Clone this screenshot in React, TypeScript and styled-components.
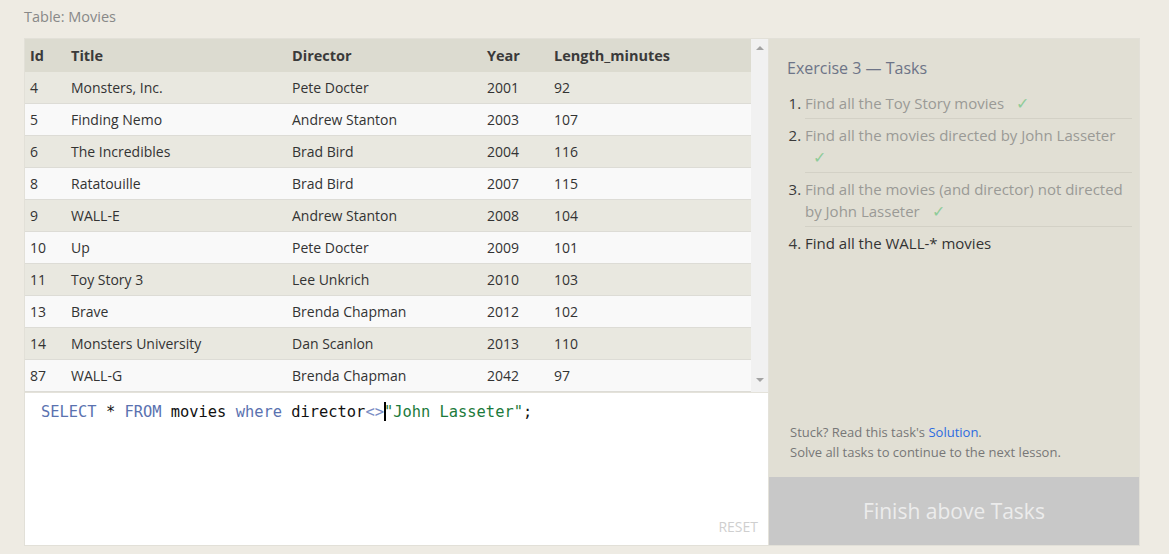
import React from "react";
import styled, { createGlobalStyle } from "styled-components";

const GlobalStyle = createGlobalStyle`
  html, body { margin: 0; padding: 0; background: #eeebe3; }
  body { font-family: "Open Sans", "Noto Sans", sans-serif; color: #333; }
  * { box-sizing: border-box; }
`;

const Page = styled.div`
  padding: 6px 29px 8px 24px;
  width: 1169px;
  height: 554px;
`;

const Caption = styled.div`
  font-size: 14.5px;
  color: #888;
  height: 24px;
  line-height: 22px;
  margin-bottom: 8px;
`;

const Frame = styled.div`
  display: flex;
  width: 1116px;
  height: 508px;
  border: 1px solid #e2e0d8;
  background: #fff;
`;

const LeftCol = styled.div`
  width: 743px;
  display: flex;
  flex-direction: column;
`;

const TableArea = styled.div`
  display: flex;
  height: 354px;
  border-bottom: 1px solid #e4e2da;
`;

const TableBody = styled.div`
  flex: 1;
  display: flex;
  flex-direction: column;
`;

const Row = styled.div<{ $kind: "head" | "odd" | "even" }>`
  display: grid;
  grid-template-columns: 41px 221px 195px 67px 1fr;
  align-items: center;
  height: ${(p) => (p.$kind === "head" ? "33px" : "32px")};
  background: ${(p) =>
    p.$kind === "head" ? "#dcdbd0" : p.$kind === "odd" ? "#e9e8e0" : "#f9f9f9"};
  border-bottom: ${(p) => (p.$kind === "head" ? "none" : "1px solid #dddcd6")};
  font-size: ${(p) => (p.$kind === "head" ? "14.5px" : "14px")};
  font-weight: ${(p) => (p.$kind === "head" ? 700 : 400)};
  color: ${(p) => (p.$kind === "head" ? "#3a3a3a" : "#333")};
`;

const Cell = styled.div`
  padding-left: 5px;
  white-space: nowrap;
`;

const Scrollbar = styled.div`
  width: 17px;
  background: #f1f1f1;
  display: flex;
  flex-direction: column;
  justify-content: space-between;
  align-items: center;
  padding: 6px 0 6px;
`;

const Arrow = styled.div<{ $up?: boolean }>`
  width: 0;
  height: 0;
  border-left: 4px solid transparent;
  border-right: 4px solid transparent;
  ${(p) =>
    p.$up ? "border-bottom: 4px solid #a3a3a3;" : "border-top: 4px solid #a3a3a3;"}
  margin-top: ${(p) => (p.$up ? "1px" : "0")};
  margin-bottom: ${(p) => (p.$up ? "0" : "4px")};
`;

const Editor = styled.div`
  flex: 1;
  background: #fff;
  padding: 8px 16px;
  display: flex;
  flex-direction: column;
  justify-content: space-between;
`;

const Code = styled.div`
  font-family: "DejaVu Sans Mono", "Liberation Mono", monospace;
  font-size: 15.4px;
  line-height: 22px;
  color: #111;
  white-space: pre;
`;

const Kw = styled.span`
  color: #5a72b0;
`;

const Op = styled.span`
  color: #7a8ec5;
`;

const Str = styled.span`
  color: #1b7a3b;
`;

const Caret = styled.span`
  display: inline-block;
  width: 2px;
  height: 19px;
  background: #000;
  vertical-align: -4px;
  margin-right: -2px;
`;

const Reset = styled.div`
  align-self: flex-end;
  font-size: 14px;
  color: #cfcfcf;
  margin-right: -6px;
  margin-bottom: 1px;
`;

const Panel = styled.div`
  flex: 1;
  background: #e1dfd4;
  display: flex;
  flex-direction: column;
  border-left: 1px solid #e4e2da;
`;

const PanelBody = styled.div`
  flex: 1;
  padding: 18px 7px 0 18px;
  display: flex;
  flex-direction: column;
`;

const PanelTitle = styled.div`
  font-size: 16px;
  color: #6d7487;
  line-height: 22px;
  margin-bottom: 8px;
`;

const TaskList = styled.ol`
  margin: 0;
  padding: 0 0 0 18px;
  font-size: 15px;
  line-height: 22px;
`;

const Task = styled.li<{ $done?: boolean }>`
  color: ${(p) => (p.$done ? "#9a9a96" : "#333")};
  padding: 5px 0 4px 0;
  border-bottom: ${(p) => (p.$done ? "1px solid #d3d1c6" : "none")};
  &::marker {
    color: #3a3a3a;
  }
`;

const Check = styled.span`
  color: #8fcc99;
  margin-left: 8px;
  font-size: 16px;
`;

const Help = styled.div`
  margin-top: auto;
  padding: 0 0 15px 3px;
  font-size: 13px;
  line-height: 20px;
  color: #777;
`;

const Link = styled.a`
  color: #2c6be0;
  text-decoration: none;
`;

const FinishButton = styled.div`
  height: 68px;
  background: #c8c8c8;
  color: #ececec;
  font-size: 21px;
  display: flex;
  align-items: center;
  justify-content: center;
`;

const rows: [string, string, string, string, string][] = [
  ["4", "Monsters, Inc.", "Pete Docter", "2001", "92"],
  ["5", "Finding Nemo", "Andrew Stanton", "2003", "107"],
  ["6", "The Incredibles", "Brad Bird", "2004", "116"],
  ["8", "Ratatouille", "Brad Bird", "2007", "115"],
  ["9", "WALL-E", "Andrew Stanton", "2008", "104"],
  ["10", "Up", "Pete Docter", "2009", "101"],
  ["11", "Toy Story 3", "Lee Unkrich", "2010", "103"],
  ["13", "Brave", "Brenda Chapman", "2012", "102"],
  ["14", "Monsters University", "Dan Scanlon", "2013", "110"],
  ["87", "WALL-G", "Brenda Chapman", "2042", "97"],
];

const tasks = [
  { text: "Find all the Toy Story movies", done: true },
  { text: "Find all the movies directed by John Lasseter", done: true },
  { text: "Find all the movies (and director) not directed by John Lasseter", done: true },
  { text: "Find all the WALL-* movies", done: false },
];

export default function App() {
  return (
    <>
      <GlobalStyle />
      <Page>
        <Caption>Table: Movies</Caption>
        <Frame>
          <LeftCol>
            <TableArea>
              <TableBody>
                <Row $kind="head">
                  <Cell>Id</Cell>
                  <Cell>Title</Cell>
                  <Cell>Director</Cell>
                  <Cell>Year</Cell>
                  <Cell>Length_minutes</Cell>
                </Row>
                {rows.map((r, i) => (
                  <Row key={r[0]} $kind={i % 2 === 0 ? "odd" : "even"}>
                    {r.map((c, j) => (
                      <Cell key={j}>{c}</Cell>
                    ))}
                  </Row>
                ))}
              </TableBody>
              <Scrollbar>
                <Arrow $up />
                <Arrow />
              </Scrollbar>
            </TableArea>
            <Editor>
              <Code>
                <Kw>SELECT</Kw> * <Kw>FROM</Kw> movies <Kw>where</Kw> director
                <Op>&lt;&gt;</Op>
                <Caret />
                <Str>"John Lasseter"</Str>;
              </Code>
              <Reset>RESET</Reset>
            </Editor>
          </LeftCol>
          <Panel>
            <PanelBody>
              <PanelTitle>Exercise 3 — Tasks</PanelTitle>
              <TaskList>
                {tasks.map((t) => (
                  <Task key={t.text} $done={t.done}>
                    {t.text}
                    {t.done && " "}
                    {t.done && <Check>✓</Check>}
                  </Task>
                ))}
              </TaskList>
              <Help>
                Stuck? Read this task's <Link href="#">Solution</Link>.
                <br />
                Solve all tasks to continue to the next lesson.
              </Help>
            </PanelBody>
            <FinishButton>Finish above Tasks</FinishButton>
          </Panel>
        </Frame>
      </Page>
    </>
  );
}
